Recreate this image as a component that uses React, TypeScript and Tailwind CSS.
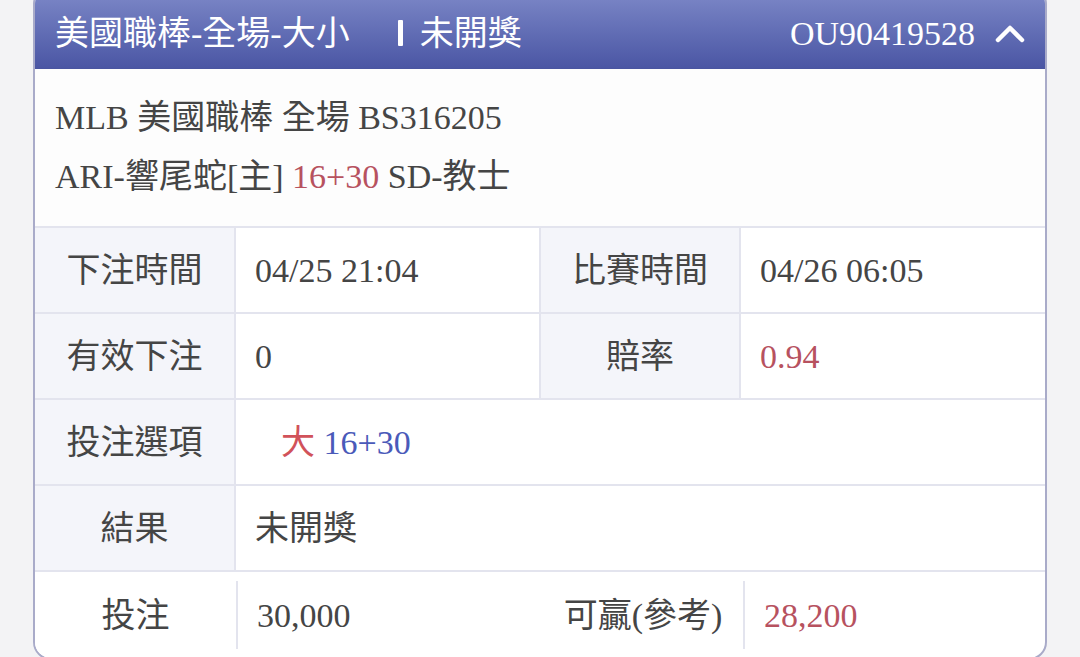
import React from 'react';

const font = "font-['Liberation_Serif','Noto_Sans_CJK_TC',serif]";

type Cell = { label: string; value: React.ReactNode };

const Row: React.FC<{ left: Cell; right?: Cell; last?: boolean }> = ({ left, right, last }) => {
  const labelBg = last ? 'bg-white' : 'bg-[#f4f5fa]';
  return (
    <div className={`flex h-[86px] ${last ? '' : 'border-b-2 border-[#e3e4ee]'}`}>
      <div className={`w-[201px] shrink-0 flex items-center justify-center ${labelBg} ${last ? '' : 'border-r-2 border-[#e3e4ee]'}`}>
        {left.label}
      </div>
      {last && <div className="w-[2px] my-[9px] bg-[#e3e4ee]" />}
      <div className={`flex items-center pl-[19px] ${right ? `w-[305px] shrink-0 ${last ? '' : 'border-r-2 border-[#e3e4ee]'}` : 'flex-1'}`}>
        {left.value}
      </div>
      {right && (
        <>
          <div className={`w-[200px] shrink-0 flex items-center justify-center ${labelBg} ${last ? '' : 'border-r-2 border-[#e3e4ee]'}`}>
            {right.label}
          </div>
          {last && <div className="w-[2px] my-[9px] bg-[#e3e4ee]" />}
          <div className="flex-1 flex items-center pl-[19px]">{right.value}</div>
        </>
      )}
    </div>
  );
};

export default function App() {
  return (
    <div className={`w-[1080px] h-[657px] overflow-hidden bg-[#f3f3f5] ${font} text-[34px] text-[#454545]`}>
      <div className="ml-[33px] w-[1014px] -mt-[14px] rounded-[18px] border-2 border-[#a9abc9] bg-white overflow-hidden">
        {/* header */}
        <div className="h-[81px] pt-[10px] flex items-center px-[20px] text-white bg-gradient-to-b from-[#7f8ac9] to-[#4b56a4] border-b border-[#4a55a0]">
          <span>美國職棒-全場-大小</span>
          <div className="ml-[48px] w-[5px] h-[26px] bg-white rounded-[1px]" />
          <span className="ml-[17px]">未開獎</span>
          <span className="ml-auto">OU90419528</span>
          <svg className="ml-[20px]" width="30" height="20" viewBox="0 0 30 20">
            <polyline points="3,17 15,5 27,17" fill="none" stroke="white" strokeWidth="4.5" strokeLinecap="round" strokeLinejoin="round" />
          </svg>
        </div>
        {/* info */}
        <div className="h-[159px] bg-[#fdfdfd] px-[20px] pt-[19px] border-b-2 border-[#e3e4ee] leading-[59px]">
          <div>MLB 美國職棒 全場 BS316205</div>
          <div>
            ARI-響尾蛇[主] <span className="text-[#b7525f]">16+30</span> SD-教士
          </div>
        </div>
        {/* table */}
        <Row left={{ label: '下注時間', value: '04/25 21:04' }} right={{ label: '比賽時間', value: '04/26 06:05' }} />
        <Row left={{ label: '有效下注', value: '0' }} right={{ label: '賠率', value: <span className="text-[#b7525f]">0.94</span> }} />
        <Row
          left={{
            label: '投注選項',
            value: (
              <span className="pl-[26px]">
                <span className="text-[#d1525a]">大</span> <span className="text-[#4a5ab9]">16+30</span>
              </span>
            ),
          }}
        />
        <Row left={{ label: '結果', value: '未開獎' }} />
        <Row last left={{ label: '投注', value: '30,000' }} right={{ label: '可贏(參考)', value: <span className="text-[#b7525f]">28,200</span> }} />
      </div>
    </div>
  );
}
